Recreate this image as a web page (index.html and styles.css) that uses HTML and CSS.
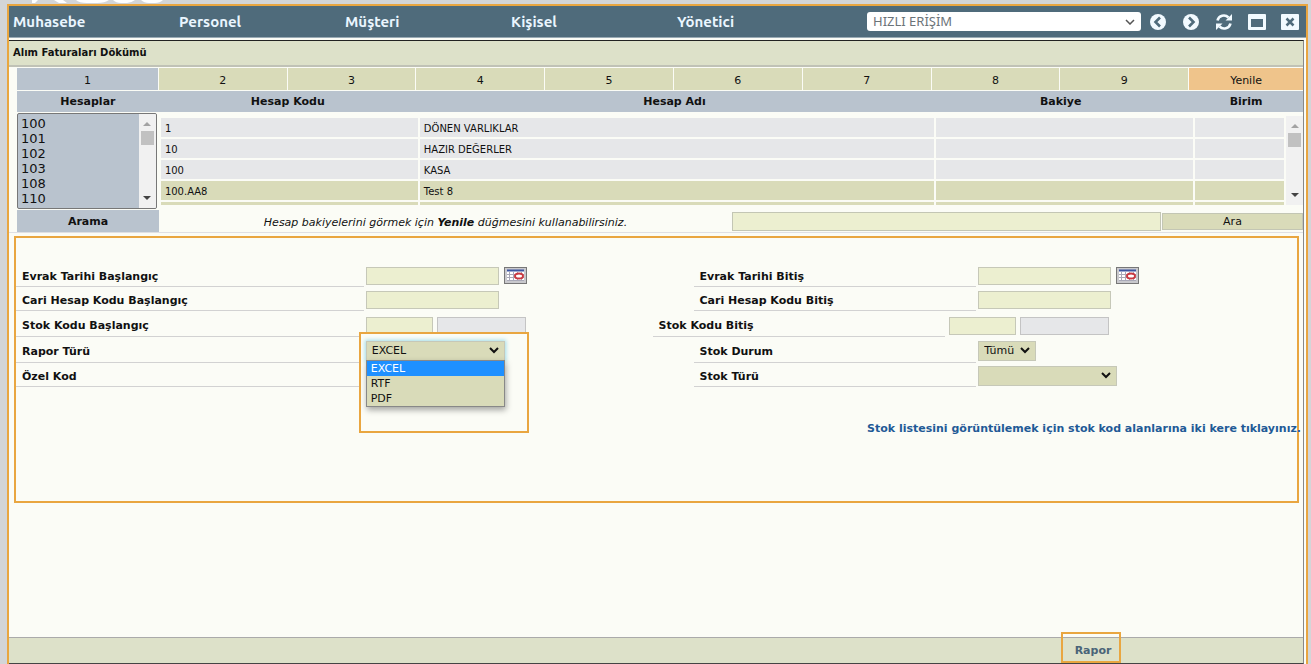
FILE: index.html
```html
<!DOCTYPE html>
<html lang="tr">
<head>
    <meta charset="UTF-8">
    <meta name="viewport" content="width=device-width, initial-scale=1.0">
    <title>Alım Faturaları Dökümü</title>
    <link rel="stylesheet" href="styles.css">
</head>
<body>
    <svg class="logo" width="140" height="4" viewBox="0 0 140 4" aria-hidden="true">
        <path d="M0 0H6L3 3H0ZM22 0H31L35 3H27ZM44 0H77Q73 3 65 3H55Q47 3 44 0ZM81 0H103Q99 3 95 3H89Q84 3 81 0ZM109 0H131Q128 3 123 3H117Q112 3 109 0Z" fill="#fff"/>
    </svg>
    <div class="window">
        <header class="topbar">
            <nav class="menu">
                <a href="#">Muhasebe</a>
                <a href="#">Personel</a>
                <a href="#">Müşteri</a>
                <a href="#">Kişisel</a>
                <a href="#">Yönetici</a>
            </nav>
            <div class="tools">
                <select class="quick" aria-label="Hızlı erişim">
                    <option>HIZLI ERİŞİM</option>
                </select>
                <button class="tool" aria-label="Geri">
                    <svg width="18" height="18" viewBox="0 0 18 18"><circle cx="9" cy="9" r="8" fill="#f2faff"/><path d="M11 4.5L6.5 9L11 13.5" fill="none" stroke="#4f6b7b" stroke-width="2.6"/></svg>
                </button>
                <button class="tool" aria-label="İleri">
                    <svg width="18" height="18" viewBox="0 0 18 18"><circle cx="9" cy="9" r="8" fill="#f2faff"/><path d="M7 4.5L11.5 9L7 13.5" fill="none" stroke="#4f6b7b" stroke-width="2.6"/></svg>
                </button>
                <button class="tool" aria-label="Yenile">
                    <svg width="18" height="18" viewBox="0 0 18 18"><path d="M2.5 7.5A6.5 6.5 0 0 1 13.5 4.5M15.5 10.5A6.5 6.5 0 0 1 4.5 13.5" fill="none" stroke="#f2faff" stroke-width="2.6"/><path d="M17 1V7.5H10.5ZM1 17V10.5H7.5Z" fill="#f2faff"/></svg>
                </button>
                <button class="tool" aria-label="Pencere">
                    <svg width="18" height="18" viewBox="0 0 18 18"><rect x="0" y="1" width="18" height="16" rx="1" fill="#f2faff"/><rect x="3" y="6" width="12" height="8" fill="#4f6b7b"/></svg>
                </button>
                <button class="tool" aria-label="Kapat">
                    <svg width="18" height="18" viewBox="0 0 18 18"><rect x="0" y="1" width="18" height="16" rx="1" fill="#f2faff"/><path d="M5.5 5.5L12.5 12.5M12.5 5.5L5.5 12.5" stroke="#4f6b7b" stroke-width="2.5"/></svg>
                </button>
            </div>
        </header>

        <main class="page">
            <h1 class="title">Alım Faturaları Dökümü</h1>

            <div class="accounts">
                <div class="tabs">
                    <button class="active">1</button>
                    <button>2</button>
                    <button>3</button>
                    <button>4</button>
                    <button>5</button>
                    <button>6</button>
                    <button>7</button>
                    <button>8</button>
                    <button>9</button>
                    <button class="refresh">Yenile</button>
                </div>
                <div class="heads">
                    <label for="accountList">Hesaplar</label>
                    <span>Hesap Kodu</span>
                    <span>Hesap Adı</span>
                    <span>Bakiye</span>
                    <span>Birim</span>
                </div>
                <div class="lists">
                    <div class="picker">
                        <select id="accountList" size="6">
                            <option>100</option>
                            <option>101</option>
                            <option>102</option>
                            <option>103</option>
                            <option>108</option>
                            <option>110</option>
                        </select>
                        <div class="scrollbar">
                            <svg width="8" height="4" viewBox="0 0 8 4"><path d="M0 4L4 0L8 4Z" fill="#a3a3a3"/></svg>
                            <span class="thumb"></span>
                            <svg class="down" width="8" height="4" viewBox="0 0 8 4"><path d="M0 0L4 4L8 0Z" fill="#444"/></svg>
                        </div>
                    </div>
                    <div class="results">
                        <div class="rows">
                            <table aria-label="Hesaplar">
                                <colgroup><col class="code"><col class="name"><col class="balance"><col class="unit"></colgroup>
                                <tr><td>1</td><td>DÖNEN VARLIKLAR</td><td></td><td></td></tr>
                                <tr><td>10</td><td>HAZIR DEĞERLER</td><td></td><td></td></tr>
                                <tr><td>100</td><td>KASA</td><td></td><td></td></tr>
                                <tr class="leaf"><td>100.AA8</td><td>Test 8</td><td></td><td></td></tr>
                                <tr class="leaf"><td></td><td></td><td></td><td></td></tr>
                            </table>
                        </div>
                        <div class="scrollbar">
                            <svg width="8" height="4" viewBox="0 0 8 4"><path d="M0 4L4 0L8 4Z" fill="#a3a3a3"/></svg>
                            <span class="thumb"></span>
                            <svg class="down" width="8" height="4" viewBox="0 0 8 4"><path d="M0 0L4 4L8 0Z" fill="#444"/></svg>
                        </div>
                    </div>
                </div>
                <div class="search">
                    <label for="search">Arama</label>
                    <p>Hesap bakiyelerini görmek için <b>Yenile</b> düğmesini kullanabilirsiniz.</p>
                    <input type="text" id="search">
                    <button>Ara</button>
                </div>
            </div>

            <form class="filters">
                <div class="columns">
                    <div class="column start">
                        <div class="row">
                            <label for="dateStart">Evrak Tarihi Başlangıç</label>
                            <div class="field">
                                <input type="text" id="dateStart">
                                <button type="button" class="calendar" aria-label="Tarih seç">
                                    <svg width="23" height="17" viewBox="0 0 23 17"><rect x=".5" y=".5" width="22" height="16" fill="#c9c9cd" stroke="#777"/><path d="M3 4H20V14H3Z" fill="#fff"/><path d="M3 3.5H20" stroke="#3c55a0" stroke-width="2"/><path d="M3 7.5H20M3 10.5H20M3 13.5H20M5.5 5V14M9.5 5V14M13.5 5V14M17.5 5V14" stroke="#a9a9b8"/><ellipse cx="15" cy="9" rx="4" ry="2.5" fill="#fff" stroke="#c93a42" stroke-width="2"/></svg>
                                </button>
                            </div>
                        </div>
                        <div class="row">
                            <label for="accountStart">Cari Hesap Kodu Başlangıç</label>
                            <div class="field"><input type="text" id="accountStart"></div>
                        </div>
                        <div class="row stock">
                            <label for="stockStart">Stok Kodu Başlangıç</label>
                            <div class="field">
                                <input type="text" id="stockStart" class="short">
                                <input type="text" class="readonly" aria-label="Stok adı başlangıç" readonly>
                            </div>
                        </div>
                        <div class="row tall">
                            <label for="reportType">Rapor Türü</label>
                            <div class="field report">
                                <div class="callout"></div>
                                <select id="reportType" class="open">
                                    <option>EXCEL</option>
                                    <option>RTF</option>
                                    <option>PDF</option>
                                </select>
                                <ul class="options">
                                    <li class="selected">EXCEL</li>
                                    <li>RTF</li>
                                    <li>PDF</li>
                                </ul>
                            </div>
                        </div>
                        <div class="row">
                            <span class="label">Özel Kod</span>
                        </div>
                    </div>

                    <div class="column end">
                        <div class="row">
                            <label for="dateEnd">Evrak Tarihi Bitiş</label>
                            <div class="field">
                                <input type="text" id="dateEnd">
                                <button type="button" class="calendar" aria-label="Tarih seç">
                                    <svg width="23" height="17" viewBox="0 0 23 17"><rect x=".5" y=".5" width="22" height="16" fill="#c9c9cd" stroke="#777"/><path d="M3 4H20V14H3Z" fill="#fff"/><path d="M3 3.5H20" stroke="#3c55a0" stroke-width="2"/><path d="M3 7.5H20M3 10.5H20M3 13.5H20M5.5 5V14M9.5 5V14M13.5 5V14M17.5 5V14" stroke="#a9a9b8"/><ellipse cx="15" cy="9" rx="4" ry="2.5" fill="#fff" stroke="#c93a42" stroke-width="2"/></svg>
                                </button>
                            </div>
                        </div>
                        <div class="row">
                            <label for="accountEnd">Cari Hesap Kodu Bitiş</label>
                            <div class="field"><input type="text" id="accountEnd"></div>
                        </div>
                        <div class="row stock">
                            <label for="stockEnd">Stok Kodu Bitiş</label>
                            <div class="field">
                                <input type="text" id="stockEnd" class="short">
                                <input type="text" class="readonly" aria-label="Stok adı bitiş" readonly>
                            </div>
                        </div>
                        <div class="row tall">
                            <label for="stockState">Stok Durum</label>
                            <div class="field">
                                <select id="stockState" class="narrow"><option>Tümü</option></select>
                            </div>
                        </div>
                        <div class="row">
                            <label for="stockType">Stok Türü</label>
                            <div class="field">
                                <select id="stockType"><option></option></select>
                            </div>
                        </div>
                    </div>
                </div>
                <p class="note">Stok listesini görüntülemek için stok kod alanlarına iki kere tıklayınız.</p>
            </form>

            <footer class="footer">
                <button class="run">Rapor</button>
            </footer>
        </main>
    </div>
</body>
</html>
```
FILE: styles.css
```css
* {
    box-sizing: border-box;
}
body {
    margin: 0;
    height: 100vh;
    display: flex;
    flex-direction: column;
    background-color: #d3d5d7;
    font-family: Verdana, "DejaVu Sans", sans-serif;
    font-size: 11px;
    color: #111;
}
button, input, select {
    font: inherit;
    color: inherit;
    border-radius: 0;
    margin: 0;
}
button {
    cursor: pointer;
    padding: 0;
}
.logo {
    display: block;
    flex: none;
    margin-left: 32px;
}
.window {
    flex: 1;
    display: flex;
    flex-direction: column;
    min-height: 0;
    margin: 0 3px 0 7px;
    border: 2px solid #e9a640;
    border-bottom: none;
    background-color: #fbfcf6;
}

/* top menu */
.topbar {
    display: flex;
    justify-content: space-between;
    align-items: center;
    height: 32px;
    flex: none;
    padding-left: 4px;
    background-color: #4f6b7b;
    border-bottom: 1px solid #9aabb5;
}
.menu {
    display: grid;
    grid-template-columns: repeat(5, 166px);
}
.menu a {
    font: bold 15px Ubuntu, "Noto Sans", sans-serif;
    color: #eaf6ff;
    text-decoration: none;
}
.tools {
    flex: 0 0 439px;
    display: flex;
    align-items: center;
    gap: 15px;
    padding-right: 7px;
}
.quick {
    flex: 1;
    min-width: 0;
    height: 19px;
    margin-right: -7px;
    padding: 0 6px;
    border: none;
    border-radius: 3px;
    appearance: none;
    font-family: "Noto Sans", sans-serif;
    font-size: 13px;
    line-height: 19px;
    color: #6b7378;
    background: #fff url("data:image/svg+xml,%3Csvg xmlns='http://www.w3.org/2000/svg' width='10' height='6'%3E%3Cpath d='M1 1L5 5L9 1' fill='none' stroke='%23555' stroke-width='1.5'/%3E%3C/svg%3E") no-repeat right 6px center;
}
.tool {
    border: none;
    background: none;
    height: 18px;
}

.page {
    flex: 1;
    display: flex;
    flex-direction: column;
    min-height: 0;
    margin: 2px 2px 0 0;
    border-top: 1px solid #222;
    border-right: 1px solid #888;
    border-bottom: 1px solid #444;
}
.title {
    margin: 0;
    padding-left: 4px;
    font-size: 10px;
    line-height: 24px;
    background-color: #dde1c9;
    border-bottom: 2px solid #c0c2b6;
}

/* account tabs and lists */
.accounts {
    padding: 1px 0 0 8px;
    border-bottom: 1px solid #dfe0e4;
}
.tabs {
    display: grid;
    grid-template-columns: 141fr repeat(8, 128fr) 114fr;
    gap: 1px;
}
.tabs button {
    height: 22px;
    padding-top: 2px;
    border: none;
    background-color: #d9dbb9;
}
.tabs .active {
    background-color: #b9c3ce;
}
.tabs .refresh {
    background-color: #efc48b;
}
.heads {
    display: grid;
    grid-template-columns: 142fr 258fr 516fr 257fr 114fr;
    margin-top: 1px;
    padding-top: 1px;
    line-height: 20px;
    font-weight: bold;
    text-align: center;
    background-color: #b9c3ce;
}
.lists {
    display: grid;
    grid-template-columns: 142fr 1145fr;
    margin-top: 1px;
    height: 96px;
}
.picker {
    display: flex;
    margin-right: 2px;
    border: 1px solid #777;
    border-radius: 2px;
    background-color: #b9c3ce;
    overflow: hidden;
}
.picker select {
    flex: 1;
    min-width: 0;
    height: 94px;
    padding: 2px 0 0;
    border: none;
    outline: none;
    overflow: hidden;
    background: none;
    font-size: 13px;
}
.picker option {
    height: 15px;
    min-height: 15px;
    padding: 0 3px;
    line-height: 15px;
}
.scrollbar {
    flex: 0 0 17px;
    display: flex;
    flex-direction: column;
    align-items: center;
    padding: 8px 0;
    background-color: #f1f1f1;
}
.thumb {
    width: 13px;
    height: 14px;
    margin-top: 5px;
    background-color: #c1c1c1;
}
.down {
    margin-top: auto;
}
.results {
    display: flex;
    margin-top: 3px;
    height: 89px;
}
.rows {
    flex: 1;
    overflow: hidden;
}
.rows table {
    width: 100%;
    table-layout: fixed;
    border-collapse: separate;
    border-spacing: 2px;
    font-size: 10px;
}
.rows .code {
    width: 23%;
}
.rows .name {
    width: 46%;
}
.rows .balance {
    width: 23%;
}
.rows .unit {
    width: 8%;
}
.rows td {
    height: 19px;
    padding: 1px 4px 0;
    background-color: #e6e7e9;
}
.rows .leaf td {
    background-color: #d9dbb9;
}
.search {
    display: grid;
    grid-template-columns: 142fr 573fr 429fr 142fr;
    align-items: center;
    height: 22px;
    margin-top: 1px;
}
.search label {
    padding-top: 2px;
    line-height: 20px;
    text-align: center;
    font-weight: bold;
    background-color: #b9c3ce;
}
.search p {
    margin: 0;
    padding-top: 2px;
    text-align: center;
    font-style: italic;
}
.search input {
    height: 19px;
    min-width: 0;
    border: 1px solid #c3c6b4;
    background-color: #ecefd0;
}
.search button {
    height: 17px;
    margin-left: 1px;
    border: 1px solid #c3c6b4;
    background-color: #d9dbb9;
}

/* report filters */
.filters {
    margin: 3px 4px 0 5px;
    min-height: 267px;
    border: 2px solid #e9a640;
    padding-top: 25px;
}
.columns {
    display: grid;
    grid-template-columns: 637fr 645fr;
}
.row {
    display: grid;
    grid-template-columns: 348fr 289fr;
    height: 24px;
}
.row.stock {
    height: 26px;
}
.row.tall {
    height: 26px;
}
.end .row {
    grid-template-columns: 283fr 321fr;
    margin-left: 41px;
}
.end .stock {
    grid-template-columns: 293fr 352fr;
    margin-left: 0;
}
.row label, .row .label {
    display: flex;
    align-items: center;
    padding: 3px 0 0 6px;
    font-weight: bold;
    border-bottom: 1px solid #d2d2d2;
}
.field {
    display: flex;
    align-items: center;
    gap: 4px;
    padding: 1px 0 0 2px;
}
.stock .field {
    padding-top: 3px;
}
.end .stock .field {
    padding-left: 4px;
}
.field input {
    width: 133px;
    height: 18px;
    border: 1px solid #c6c8b8;
    background-color: #ecefd0;
}
.field .short {
    width: 67px;
}
.field .readonly {
    width: 89px;
    background-color: #e6e7e9;
    border-color: #c4c4c4;
}
.field select {
    width: 139px;
    height: 20px;
    padding: 0 5px;
    border: 1px solid #c6c8b8;
    appearance: none;
    background: #d9dbb9 url("data:image/svg+xml,%3Csvg xmlns='http://www.w3.org/2000/svg' width='10' height='7'%3E%3Cpath d='M1 1L5 5L9 1' fill='none' stroke='%23111' stroke-width='2'/%3E%3C/svg%3E") no-repeat right 5px center;
}
.field .narrow {
    width: 58px;
}
.calendar {
    height: 17px;
    margin-left: 1px;
    border: none;
    background: none;
}
.report {
    position: relative;
}
.callout {
    position: absolute;
    left: -5px;
    top: -5px;
    width: 170px;
    height: 101px;
    border: 2px solid #e9a640;
    background-color: #fbfcf6;
}
.field .open {
    position: relative;
    box-shadow: 0 0 4px 1px #9fdcea;
}
.options {
    position: absolute;
    left: 2px;
    top: 23px;
    width: 139px;
    margin: 0;
    padding: 0;
    list-style: none;
    border: 1px solid #888;
    background-color: #d9dbb9;
    box-shadow: 1px 3px 6px rgba(0, 0, 0, 0.35);
}
.options li {
    padding-left: 4px;
    line-height: 15px;
}
.options .selected {
    color: #fff;
    background-color: #1e90ff;
}
.note {
    margin: 34px -4px 0 0;
    text-align: right;
    font-weight: bold;
    line-height: 16px;
    color: #1f5a96;
}

.footer {
    display: flex;
    justify-content: flex-end;
    height: 26px;
    margin-top: auto;
    padding-right: 182px;
    background-color: #dde1c9;
    border-top: 1px solid #aaa;
}
.run {
    width: 60px;
    height: 31px;
    margin-top: -6px;
    padding: 5px 0 0 4px;
    border: 2px solid #e9a640;
    background: none;
    font-weight: bold;
    color: #4a6478;
}
```
